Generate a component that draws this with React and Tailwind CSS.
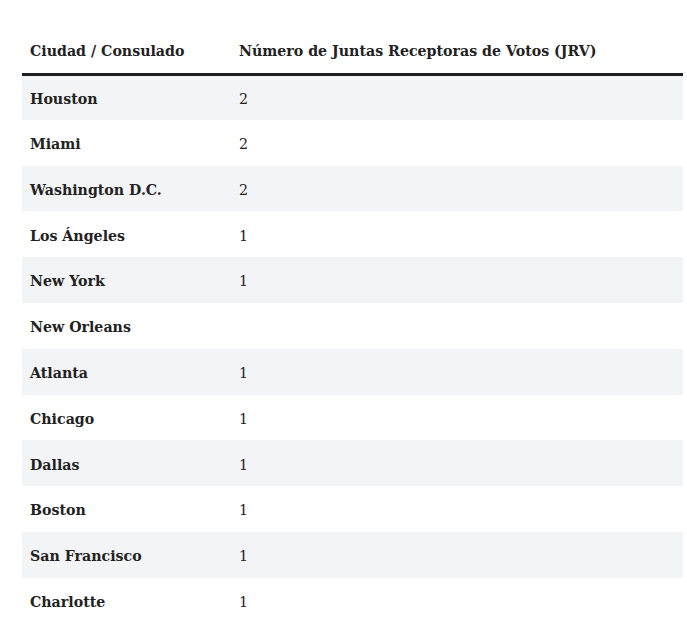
import React from "react";

const rows = [
  { city: "Houston", jrv: "2" },
  { city: "Miami", jrv: "2" },
  { city: "Washington D.C.", jrv: "2" },
  { city: "Los Ángeles", jrv: "1" },
  { city: "New York", jrv: "1" },
  { city: "New Orleans", jrv: "" },
  { city: "Atlanta", jrv: "1" },
  { city: "Chicago", jrv: "1" },
  { city: "Dallas", jrv: "1" },
  { city: "Boston", jrv: "1" },
  { city: "San Francisco", jrv: "1" },
  { city: "Charlotte", jrv: "1" },
];

export default function App() {
  return (
    <div className="bg-white min-h-screen px-[22px] pt-[22px] overflow-hidden h-[634px] text-[#222222] font-['DejaVu_Serif',serif]">
      <table className="w-[661px] border-collapse text-[14.2px]">
        <thead>
          <tr className="border-b-[3px] border-[#1d1f22]">
            <th className="text-left font-bold h-[52px] pl-2 w-[209px] pt-[8px]">Ciudad / Consulado</th>
            <th className="text-left font-bold h-[52px] pl-2 pt-[8px]">Número de Juntas Receptoras de Votos (JRV)</th>
          </tr>
        </thead>
        <tbody>
          {rows.map((r, i) => (
            <tr key={r.city} className={i % 2 === 0 ? "bg-[#f3f4f5]" : "bg-white"}>
              <td className="h-[45.8px] pl-2 pt-[4px] font-bold">{r.city}</td>
              <td className="h-[45.8px] pl-2 pt-[4px]">{r.jrv}</td>
            </tr>
          ))}
        </tbody>
      </table>
      {/* caption, cut off by the window */}
      <p className="text-center text-[11px] text-[#999999] mt-[20px] font-['DejaVu_Sans',sans-serif]">Fuente: Cancillería</p>
    </div>
  );
}
